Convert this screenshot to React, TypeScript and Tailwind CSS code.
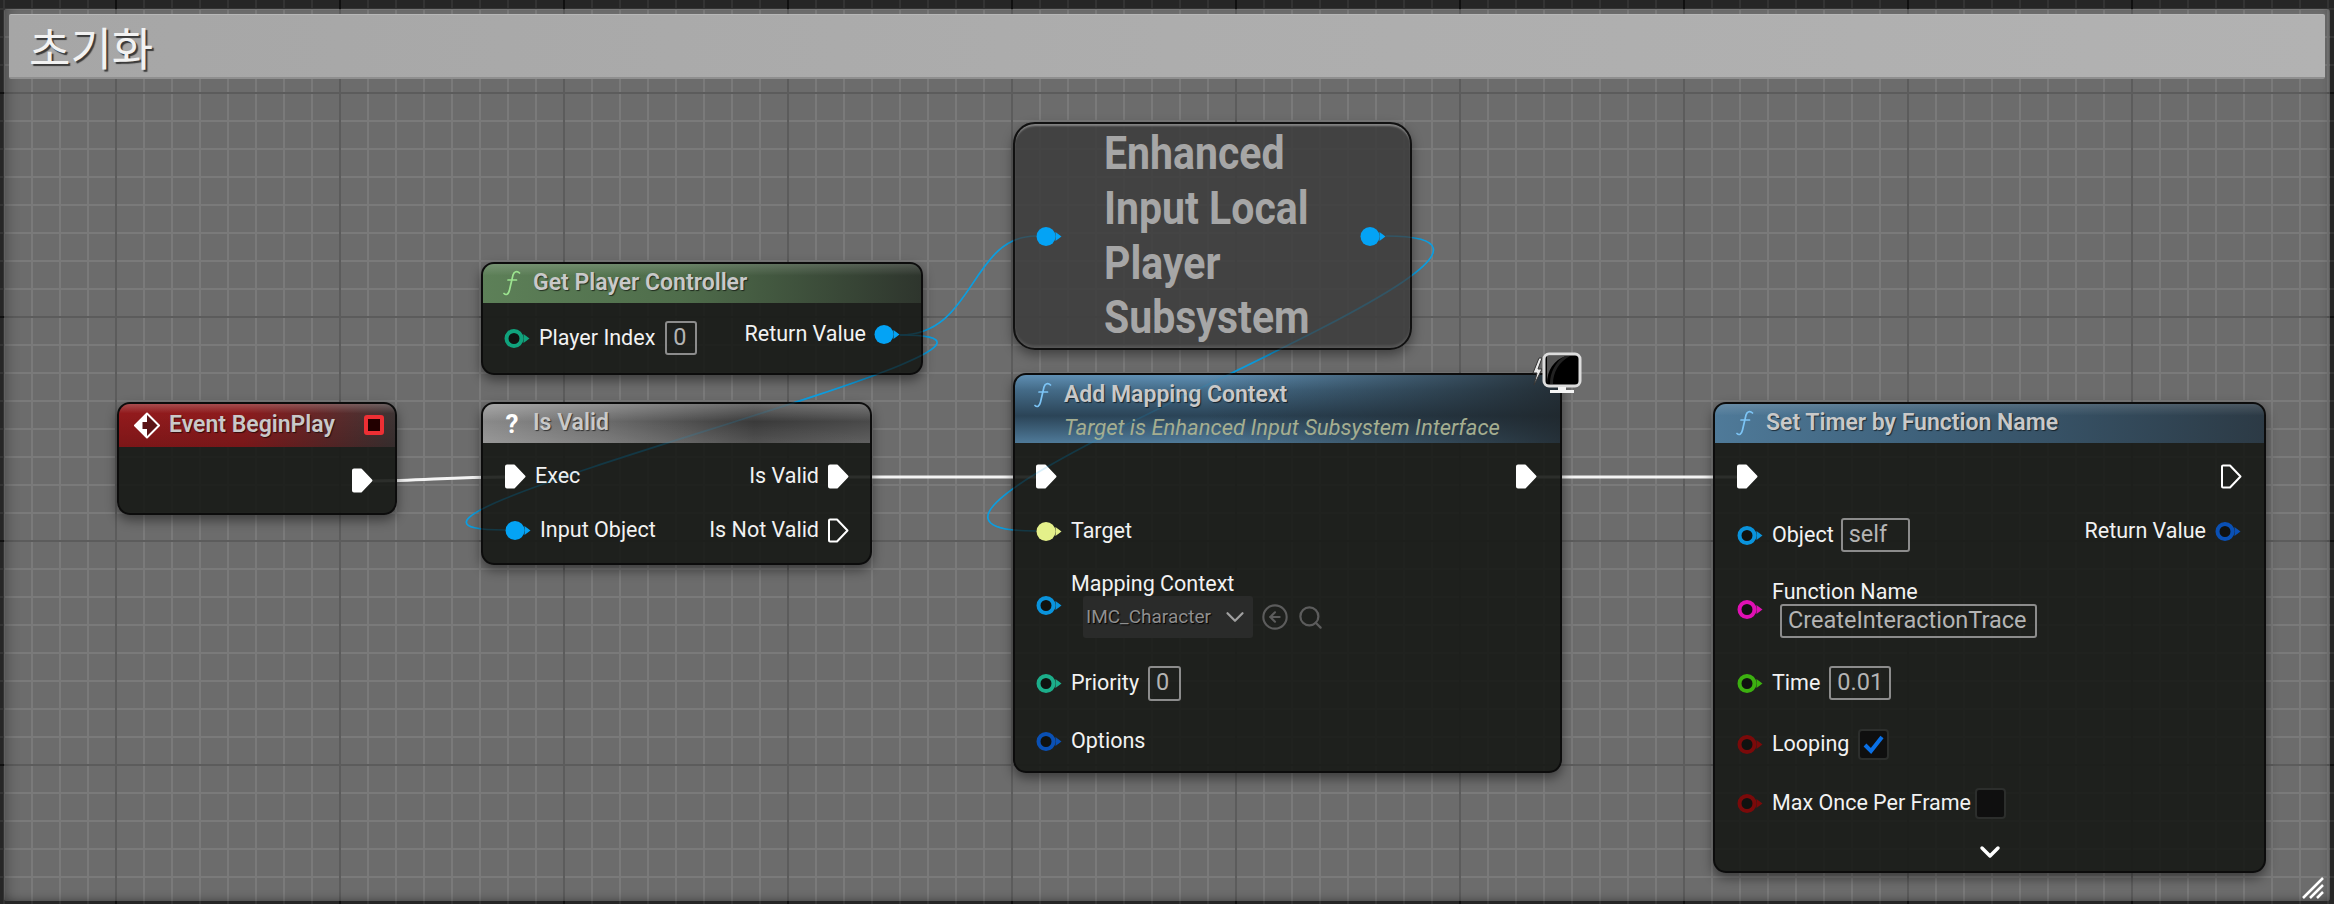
import type { ReactNode } from 'react';
import { ChevronDown, CircleArrowLeft, Search } from 'lucide-react';

const Pin = ({ color, filled = false }: { color: string; filled?: boolean }) => (
  <svg width="26" height="19" viewBox="0 0 26 19" className="shrink-0">
    <path d="M19.5 5 L25.5 9.5 L19.5 14 Z" fill={color} />
    <circle
      cx="10"
      cy="9.5"
      r={filled ? 9.5 : 7.5}
      fill={filled ? color : '#101210'}
      stroke={filled ? 'none' : color}
      strokeWidth={filled ? 0 : 4}
    />
  </svg>
);

const ExecPin = ({ filled = true }: { filled?: boolean }) => (
  <svg width="21" height="25" viewBox="0 0 21 25" className="shrink-0">
    <path
      d="M2 1.5 H9 L19.5 12.5 L9 23.5 H2 Q1 23.5 1 22.5 V2.5 Q1 1.5 2 1.5 Z"
      fill={filled ? '#ffffff' : 'none'}
      stroke="#ffffff"
      strokeWidth="2"
      strokeLinejoin="round"
    />
  </svg>
);

const FnIcon = ({ color }: { color: string }) => (
  <svg width="18" height="26" viewBox="0 0 18 26" className="shrink-0">
    <path
      d="M16.5 3 C14 0.5 11 1.5 10 5 L6.5 20 C5.5 24.5 3 25.5 1 23.5 M5 10 H13.5"
      fill="none"
      stroke={color}
      strokeWidth="1.7"
      strokeLinecap="round"
    />
  </svg>
);

const ValueBox = ({ value, className }: { value: string; className: string }) => (
  <div
    className={`flex items-center border-2 border-[#8c8c8c] rounded-[3px] text-[#b4b4b4] text-[23.5px] px-[6px] ${className}`}
  >
    {value}
  </div>
);

const Node = ({
  className,
  header,
  headerClass,
  children,
}: {
  className: string;
  header: ReactNode;
  headerClass: string;
  children: ReactNode;
}) => (
  <div
    className={`absolute flex flex-col rounded-[13px] border-2 border-[#0c0c0c] bg-[#161815]/90 shadow-[0_5px_12px_rgba(0,0,0,0.45)] overflow-hidden ${className}`}
  >
    <div className={`flex items-start shrink-0 ${headerClass}`}>{header}</div>
    {children}
  </div>
);

const Title = ({ text }: { text: string }) => (
  <span className="text-[23px] leading-[26px] font-semibold text-[#c9c9c9] whitespace-nowrap [text-shadow:1px_1px_1px_rgba(0,0,0,0.6)]">
    {text}
  </span>
);

const Label = ({ text }: { text: string }) => (
  <span className="text-[21.5px] leading-[24px] text-[#f2f2f2] whitespace-nowrap">{text}</span>
);

const Checkbox = ({ checked, className }: { checked?: boolean; className?: string }) => (
  <div
    className={`flex items-center justify-center w-[31px] h-[31px] rounded-[4px] bg-[#0f0f0f] border-2 border-[#2c2e2c] ${className ?? ''}`}
  >
    {checked && (
      <svg width="21" height="20" viewBox="0 0 21 20">
        <path d="M2 11 L8 17 L19 3" fill="none" stroke="#0a70e6" strokeWidth="4" />
      </svg>
    )}
  </div>
);

const BLUE_HEADER =
  'bg-[linear-gradient(90deg,rgba(30,36,40,0)_35%,rgba(30,36,40,0.85)_100%),linear-gradient(180deg,#5f8fb3_0%,#446b88_22%,#2b4457_60%,#4f7a99_100%)]';

const BLUE_WIRES = [
  'M900 335 C975 335 970 236 1036 236',
  'M900 335 C1120 335 280 530 505 530',
  'M1386 236 C1640 236 780 531 1036 531',
];

export default function App() {
  return (
    <div className="relative w-[2334px] h-[904px] overflow-hidden pt-[9px] pl-[4px] pr-[4px] pb-[3px] font-['Roboto','Noto_Sans_CJK_KR',sans-serif] bg-[#262626] bg-[linear-gradient(to_right,#101010_2px,transparent_2px),linear-gradient(to_bottom,#101010_2px,transparent_2px),linear-gradient(to_right,#333_2px,transparent_2px),linear-gradient(to_bottom,#333_2px,transparent_2px)] bg-[size:224px_224px,224px_224px,28px_28px,28px_28px] bg-[position:115px_92px,115px_92px,3px_8px,3px_8px]">
      {/* comment box */}
      <div className="h-full pt-[5px] px-[5px] rounded-[3px] bg-[#6c6c6c] bg-[linear-gradient(to_right,#5c5c5c_2px,transparent_2px),linear-gradient(to_bottom,#5c5c5c_2px,transparent_2px),linear-gradient(to_right,#7a7a7a_2px,transparent_2px),linear-gradient(to_bottom,#7a7a7a_2px,transparent_2px)] bg-[size:224px_224px,224px_224px,28px_28px,28px_28px] bg-[position:111px_83px,111px_83px,27px_27px,27px_27px] shadow-[inset_12px_0_12px_-8px_rgba(0,0,0,0.25),inset_-8px_0_10px_-8px_rgba(0,0,0,0.25),inset_0_-6px_8px_-4px_rgba(0,0,0,0.25)]">
        <div className="flex items-center h-[65px] pl-[20px] rounded-[2px] bg-[linear-gradient(90deg,#a6a6a6,#adadad_50%,#b2b2b2)] border-t border-b-2 border-[#b8b8b8] border-b-[#8f8f8f]">
          <span className="text-[45px] leading-none text-[#f2f2f2] font-['Noto_Sans_CJK_KR',sans-serif] [text-shadow:2px_2px_1px_#3a3a3a]">
            초기화
          </span>
        </div>
      </div>

      {/* wires */}
      <svg className="absolute left-0 top-0" width="2334" height="904" fill="none">
        <g stroke="#0c9ee0" strokeWidth="1.7">
          {BLUE_WIRES.map((d) => (
            <path key={d} d={d} />
          ))}
        </g>
        <g stroke="#f4f4f4" strokeWidth="3">
          <path d="M373 481 C420 481 450 477 505 477" />
          <path d="M849 477 H1036" />
          <path d="M1537 477 H1737" />
        </g>
      </svg>

      {/* Event BeginPlay */}
      <Node
        className="left-[117px] top-[402px] w-[280px] h-[113px]"
        headerClass="h-[43px] pl-[15px] pt-[8px] gap-[9px] bg-[linear-gradient(180deg,rgba(255,255,255,0.22)_0%,rgba(255,255,255,0)_22%,rgba(0,0,0,0.15)_100%),linear-gradient(90deg,#921a1c_0%,#8c1b1d_45%,#3e3434_100%)]"
        header={
          <>
            <svg width="26" height="27" viewBox="0 0 26 27" className="shrink-0">
              <path d="M13 1.5 L25 13.5 L13 25.5 L1 13.5 Z" fill="#5a1416" stroke="#ffffff" strokeWidth="2" strokeLinejoin="round" />
              <path d="M13 1.5 L1 13.5 L13 25.5 V17 H8.5 L8.5 10 H13 Z" fill="#ffffff" />
            </svg>
            <Title text="Event BeginPlay" />
            <div className="ml-auto mr-[11px] mt-[3px] w-[20px] h-[20px] rounded-[3px] border-[4px] border-[#ee2f34] bg-[#220000]" />
          </>
        }
      >
        <div className="flex-1 flex items-center justify-end pr-[22px]">
          <ExecPin />
        </div>
      </Node>

      {/* Get Player Controller */}
      <Node
        className="left-[481px] top-[262px] w-[442px] h-[113px]"
        headerClass="h-[39px] pl-[20px] pt-[6px] gap-[12px] bg-[linear-gradient(180deg,rgba(255,255,255,0.16)_0%,rgba(255,255,255,0)_30%),linear-gradient(90deg,#5d8058_0%,#4f6d4b_45%,#2e352d_100%)]"
        header={
          <>
            <FnIcon color="#9be38f" />
            <Title text="Get Player Controller" />
          </>
        }
      >
        <div className="flex-1 flex items-center justify-between pl-[21px] pr-[21px]">
          <div className="flex items-center gap-[9px]">
            <Pin color="#10a27c" />
            <Label text="Player Index" />
            <ValueBox value="0" className="w-[32px] h-[34px] ml-[1px]" />
          </div>
          <div className="flex items-center gap-[8px] mb-[8px]">
            <Label text="Return Value" />
            <Pin color="#04a3f5" filled />
          </div>
        </div>
      </Node>

      {/* Is Valid */}
      <Node
        className="left-[481px] top-[402px] w-[391px] h-[163px]"
        headerClass="h-[39px] pl-[20px] pt-[6px] gap-[12px] bg-[linear-gradient(180deg,rgba(255,255,255,0.25)_0%,rgba(255,255,255,0)_45%,rgba(255,255,255,0.12)_100%),linear-gradient(90deg,#8a8a8a_0%,#6d6d6d_30%,#3a3a3a_70%,#4a4a4a_100%)]"
        header={
          <>
            <span className="w-[18px] text-center text-[26px] leading-[28px] font-bold text-white">?</span>
            <Title text="Is Valid" />
          </>
        }
      >
        <div className="flex items-center justify-between h-[54px] mt-[6px] pl-[22px] pr-[21px]">
          <div className="flex items-center gap-[9px]">
            <ExecPin />
            <Label text="Exec" />
          </div>
          <div className="flex items-center gap-[9px]">
            <Label text="Is Valid" />
            <ExecPin />
          </div>
        </div>
        <div className="flex items-center justify-between h-[54px] pl-[22px] pr-[21px]">
          <div className="flex items-center gap-[9px]">
            <Pin color="#04a3f5" filled />
            <Label text="Input Object" />
          </div>
          <div className="flex items-center gap-[9px]">
            <Label text="Is Not Valid" />
            <ExecPin filled={false} />
          </div>
        </div>
      </Node>

      {/* Enhanced Input Local Player Subsystem */}
      <div className="absolute left-[1013px] top-[122px] w-[399px] h-[228px] flex items-center justify-between pl-[21px] pr-[24px] rounded-[22px] border-2 border-[#111] bg-[#3e3e3e]/90 shadow-[inset_0_3px_2px_-1px_rgba(255,255,255,0.35),inset_0_-3px_3px_-1px_rgba(255,255,255,0.12),0_5px_12px_rgba(0,0,0,0.4)]">
        <Pin color="#04a3f5" filled />
        <div className="w-[230px] ml-[42px] mr-auto text-[41px] leading-[49px] font-bold text-[#a6a6a6] scale-y-[1.12]">
          Enhanced Input Local Player Subsystem
        </div>
        <Pin color="#04a3f5" filled />
      </div>

      {/* Add Mapping Context */}
      <Node
        className={`left-[1013px] top-[373px] w-[549px] h-[400px]`}
        headerClass={`h-[68px] pl-[19px] pt-[7px] gap-[12px] ${BLUE_HEADER}`}
        header={
          <>
            <FnIcon color="#7cc4f5" />
            <div className="flex flex-col gap-[8px]">
              <Title text="Add Mapping Context" />
              <span className="text-[22px] leading-[24px] italic text-[#a5ae90] whitespace-nowrap">
                Target is Enhanced Input Subsystem Interface
              </span>
            </div>
          </>
        }
      >
        <div className="flex items-center justify-between h-[54px] mt-[6px] pl-[21px] pr-[23px] shrink-0">
          <ExecPin />
          <ExecPin />
        </div>
        <div className="flex items-center gap-[9px] h-[56px] pl-[21px] shrink-0">
          <Pin color="#e4f08a" filled />
          <Label text="Target" />
        </div>
        <div className="flex items-center gap-[9px] h-[92px] pl-[21px] shrink-0">
          <Pin color="#0a93dc" />
          <div className="flex flex-col">
            <Label text="Mapping Context" />
            <div className="flex items-center ml-[12px] gap-[8px]">
              <div className="flex items-center justify-between w-[170px] h-[42px] pl-[3px] pr-[3px] rounded-[3px] bg-[#2a2b2a] text-[19px] text-[#8f8f8f] [text-shadow:1px_1px_1px_#000]">
                IMC_Character
                <ChevronDown size={30} strokeWidth={1.8} color="#a0a0a0" />
              </div>
              <CircleArrowLeft size={28} strokeWidth={1.8} color="#5c5c5c" />
              <Search size={27} strokeWidth={2} color="#5c5c5c" />
            </div>
          </div>
        </div>
        <div className="flex items-center gap-[9px] h-[64px] pl-[21px] shrink-0">
          <Pin color="#1cae8a" />
          <Label text="Priority" />
          <ValueBox value="0" className="w-[33px] h-[35px]" />
        </div>
        <div className="flex items-center gap-[9px] h-[52px] pl-[21px] shrink-0">
          <Pin color="#0a50b4" />
          <Label text="Options" />
        </div>
      </Node>

      {/* client icon */}
      <svg className="absolute left-[1532px] top-[352px]" width="50" height="44" viewBox="0 0 50 44">
        <path d="M7 6 L1 21 L5 21 L2 33 L10 17 L6 17 L10 6 Z" fill="#e8e8e8" stroke="#333" strokeWidth="1" />
        <rect x="12" y="2" width="36" height="32" rx="5" fill="#000" stroke="#dcdcdc" strokeWidth="3" />
        <path d="M15 32 C15 18 22 8 34 4 L15 4 Z" fill="#555" />
        <path d="M21 32 C21 20 27 10 38 4 L33 4 C24 9 18 20 18 32 Z" fill="#222" />
        <path d="M26 35 H34 V38 H42 V41 H18 V38 H26 Z" fill="#f4f4f4" />
      </svg>

      {/* Set Timer by Function Name */}
      <Node
        className="left-[1713px] top-[402px] w-[553px] h-[471px]"
        headerClass={`h-[39px] pl-[21px] pt-[6px] gap-[12px] bg-[linear-gradient(180deg,rgba(255,255,255,0.14)_0%,rgba(255,255,255,0)_30%),linear-gradient(90deg,#4f7a99_0%,#3d5f78_40%,#2c3a45_100%)]`}
        header={
          <>
            <FnIcon color="#7cc4f5" />
            <Title text="Set Timer by Function Name" />
          </>
        }
      >
        <div className="flex items-center justify-between h-[50px] mt-[8px] pl-[22px] pr-[22px] shrink-0">
          <ExecPin />
          <ExecPin filled={false} />
        </div>
        <div className="flex items-center justify-between h-[68px] pl-[22px] pr-[23px] shrink-0">
          <div className="flex items-center gap-[9px]">
            <Pin color="#0a93dc" />
            <Label text="Object" />
            <ValueBox value="self" className="w-[69px] h-[34px] ml-[-2px]" />
          </div>
          <div className="flex items-center gap-[9px] mb-[8px]">
            <Label text="Return Value" />
            <Pin color="#0a50b4" />
          </div>
        </div>
        <div className="flex items-center gap-[9px] h-[80px] pl-[22px] shrink-0">
          <Pin color="#e010b4" />
          <div className="flex flex-col">
            <Label text="Function Name" />
            <ValueBox value="CreateInteractionTrace" className="w-[257px] h-[34px] ml-[8px] whitespace-nowrap" />
          </div>
        </div>
        <div className="flex items-center gap-[9px] h-[68px] pl-[22px] shrink-0">
          <Pin color="#3cb010" />
          <Label text="Time" />
          <ValueBox value="0.01" className="w-[62px] h-[34px]" />
        </div>
        <div className="flex items-center gap-[9px] h-[54px] pl-[22px] shrink-0">
          <Pin color="#7a0a0a" />
          <Label text="Looping" />
          <Checkbox checked />
        </div>
        <div className="flex items-center gap-[9px] h-[64px] pl-[22px] shrink-0">
          <Pin color="#7a0a0a" />
          <Label text="Max Once Per Frame" />
          <Checkbox className="ml-[-5px]" />
        </div>
        <div className="flex items-center justify-center h-[34px] shrink-0">
          <ChevronDown size={32} strokeWidth={2.6} color="#ffffff" />
        </div>
      </Node>

      {/* wires seen through the nodes */}
      <svg className="absolute left-0 top-0 opacity-15 pointer-events-none" width="2334" height="904" fill="none">
        <g stroke="#0c9ee0" strokeWidth="1.7">
          {BLUE_WIRES.map((d) => (
            <path key={d} d={d} />
          ))}
        </g>
      </svg>

      {/* resize grip */}
      <svg className="absolute left-[2302px] top-[877px]" width="22" height="22" viewBox="0 0 22 22" stroke="#ffffff" strokeWidth="2.5">
        <path d="M1 21 L21 1 M8 21 L21 8 M15 21 L21 15" />
      </svg>
    </div>
  );
}
